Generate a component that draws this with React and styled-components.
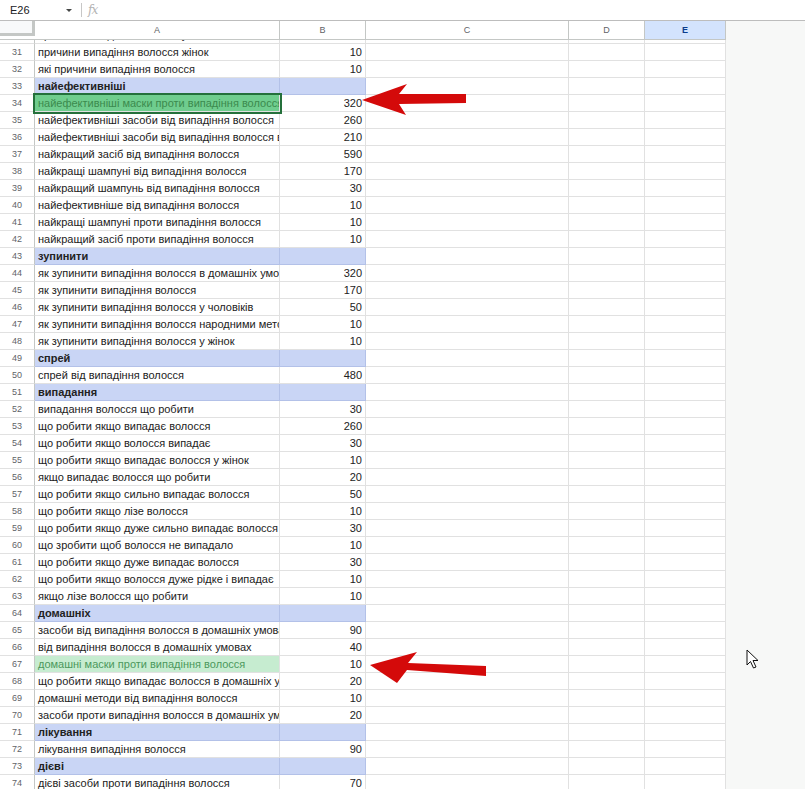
import React from "react";
import styled, { createGlobalStyle, css } from "styled-components";

const GlobalStyle = createGlobalStyle`
  html, body {
    margin: 0;
    padding: 0;
    background: #ffffff;
    overflow: hidden;
  }
  * {
    box-sizing: border-box;
  }
`;

const FONT = `"Liberation Sans", Arial, sans-serif`;

const COLS = [
  { key: "A", width: 245 },
  { key: "B", width: 86 },
  { key: "C", width: 203 },
  { key: "D", width: 76 },
  { key: "E", width: 81 },
];

const ROWS = [
  [30, "причини випадіння волосся у чоловіків", 10],
  [31, "причини випадіння волосся жінок", 10],
  [32, "які причини випадіння волосся", 10],
  [33, "найефективніші", null, "section"],
  [34, "найефективніші маски проти випадіння волосся", 320, "hot"],
  [35, "найефективніші засоби від випадіння волосся", 260],
  [36, "найефективніші засоби від випадіння волосся в домашніх умовах", 210],
  [37, "найкращий засіб від випадіння волосся", 590],
  [38, "найкращі шампуні від випадіння волосся", 170],
  [39, "найкращий шампунь від випадіння волосся", 30],
  [40, "найефективніше від випадіння волосся", 10],
  [41, "найкращі шампуні проти випадіння волосся", 10],
  [42, "найкращий засіб проти випадіння волосся", 10],
  [43, "зупинити", null, "section"],
  [44, "як зупинити випадіння волосся в домашніх умовах", 320],
  [45, "як зупинити випадіння волосся", 170],
  [46, "як зупинити випадіння волосся у чоловіків", 50],
  [47, "як зупинити випадіння волосся народними методами", 10],
  [48, "як зупинити випадіння волосся у жінок", 10],
  [49, "спрей", null, "section"],
  [50, "спрей від випадіння волосся", 480],
  [51, "випадання", null, "section"],
  [52, "випадання волосся що робити", 30],
  [53, "що робити якщо випадає волосся", 260],
  [54, "що робити якщо волосся випадає", 30],
  [55, "що робити якщо випадає волосся у жінок", 10],
  [56, "якщо випадає волосся що робити", 20],
  [57, "що робити якщо сильно випадає волосся", 50],
  [58, "що робити якщо лізе волосся", 10],
  [59, "що робити якщо дуже сильно випадає волосся", 30],
  [60, "що зробити щоб волосся не випадало", 10],
  [61, "що робити якщо дуже випадає волосся", 30],
  [62, "що робити якщо волосся дуже рідке і випадає", 10],
  [63, "якщо лізе волосся що робити", 10],
  [64, "домашніх", null, "section"],
  [65, "засоби від випадіння волосся в домашніх умовах", 90],
  [66, "від випадіння волосся в домашніх умовах", 40],
  [67, "домашні маски проти випадіння волосся", 10, "soft"],
  [68, "що робити якщо випадає волосся в домашніх умовах", 20],
  [69, "домашні методи від випадіння волосся", 10],
  [70, "засоби проти випадіння волосся в домашніх умовах", 20],
  [71, "лікування", null, "section"],
  [72, "лікування випадіння волосся", 90],
  [73, "дієві", null, "section"],
  [74, "дієві засоби проти випадіння волосся", 70],
];

const Page = styled.div`
  position: relative;
  width: 805px;
  height: 789px;
  overflow: hidden;
  font-family: ${FONT};
  color: #222222;
`;

const FormulaBar = styled.div`
  display: flex;
  align-items: center;
  height: 21px;
  border-bottom: 1px solid #bdbdbd;
  background: #ffffff;
`;

const NameBox = styled.div`
  display: flex;
  align-items: center;
  justify-content: space-between;
  width: 72px;
  padding: 0 0 0 10px;
  font-size: 11px;
  color: #202124;
`;

const Caret = styled.span`
  width: 0;
  height: 0;
  border-left: 3px solid transparent;
  border-right: 3px solid transparent;
  border-top: 3px solid #444746;
`;

const Divider = styled.span`
  width: 1px;
  height: 14px;
  margin: 0 6px 0 9px;
  background: #c7c7c7;
`;

const Fx = styled.span`
  font-family: "DejaVu Serif", "Liberation Serif", serif;
  font-style: italic;
  font-size: 12px;
  color: #b4b4b4;
  letter-spacing: -1px;
`;

const Workspace = styled.div`
  display: flex;
  height: calc(100% - 21px);
`;

const Sheet = styled.div`
  display: flex;
  flex-direction: column;
  width: 726px;
  height: 100%;
`;

const Gutter = styled.div`
  flex: 1;
  background: #f7f8f7;
`;

const HeaderRow = styled.div`
  display: flex;
  height: 19px;
  flex-shrink: 0;
`;

const Corner = styled.div`
  width: 35px;
  height: 19px;
  border-bottom: 1px solid #c4c7c5;
  background: #ffffff;
`;

const CornerHandle = styled.div`
  width: 35px;
  height: 15px;
  background: #f8f9fa;
  border-right: 3px solid #c4c7c5;
  border-bottom: 3px solid #c4c7c5;
`;

const ColHead = styled.div`
  width: ${(p) => p.$width}px;
  height: 19px;
  display: flex;
  align-items: center;
  justify-content: center;
  font-size: 9px;
  border-right: 1px solid #c4c7c5;
  border-bottom: 1px solid #c4c7c5;
  color: ${(p) => (p.$active ? "#0b3c8c" : "#5f6368")};
  font-weight: ${(p) => (p.$active ? "bold" : "normal")};
  background: ${(p) => (p.$active ? "#d3e3fd" : "#ffffff")};
`;

const Body = styled.div`
  flex: 1;
  overflow: hidden;
`;

const Rows = styled.div`
  margin-top: -13px;
`;

const Row = styled.div`
  display: flex;
  height: 17px;
`;

const RowNum = styled.div`
  width: 35px;
  height: 17px;
  display: flex;
  align-items: center;
  justify-content: center;
  font-size: 9px;
  color: #5f6368;
  border-right: 1px solid #c4c7c5;
  border-bottom: 1px solid #e1e1e1;
`;

const kindStyles = {
  section: css`
    background: #c9d5f5;
    font-weight: bold;
    border-color: #b3c1e8;
  `,
  hot: css`
    background: #6fcd8e;
    color: #3b8a4d;
    outline: 2px solid #24703b;
    outline-offset: 0;
    position: relative;
    z-index: 1;
  `,
  soft: css`
    background: #c6ecd0;
    color: #4b985c;
  `,
};

const Cell = styled.div`
  width: ${(p) => p.$width}px;
  height: 17px;
  padding: 0 3px;
  font-size: 11px;
  line-height: 16px;
  white-space: nowrap;
  overflow: hidden;
  text-align: ${(p) => (p.$num ? "right" : "left")};
  border-right: 1px solid #e1e1e1;
  border-bottom: 1px solid #e1e1e1;
  ${(p) => p.$kind && kindStyles[p.$kind]}
`;

const Overlay = styled.svg`
  position: absolute;
  left: 0;
  top: 0;
  width: 805px;
  height: 789px;
  pointer-events: none;
`;

function SheetRow({ num, text, value, kind }) {
  const section = kind === "section";
  return (
    <Row>
      <RowNum>{num}</RowNum>
      <Cell $width={COLS[0].width} $kind={kind}>
        {text}
      </Cell>
      <Cell $width={COLS[1].width} $num $kind={section ? "section" : undefined}>
        {value}
      </Cell>
      <Cell $width={COLS[2].width} />
      <Cell $width={COLS[3].width} />
      <Cell $width={COLS[4].width} />
    </Row>
  );
}

export default function App() {
  return (
    <Page>
      <GlobalStyle />
      <FormulaBar>
        <NameBox>
          E26
          <Caret />
        </NameBox>
        <Divider />
        <Fx>fx</Fx>
      </FormulaBar>
      <Workspace>
        <Sheet>
          <HeaderRow>
            <Corner>
              <CornerHandle />
            </Corner>
            {COLS.map((c) => (
              <ColHead key={c.key} $width={c.width} $active={c.key === "E"}>
                {c.key}
              </ColHead>
            ))}
          </HeaderRow>
          <Body>
            <Rows>
              {ROWS.map(([num, text, value, kind]) => (
                <SheetRow key={num} num={num} text={text} value={value} kind={kind} />
              ))}
            </Rows>
          </Body>
        </Sheet>
        <Gutter />
      </Workspace>
      <Overlay viewBox="0 0 805 789">
        <polygon
          points="362,100 407,84 399,94 466,94 466,103 399,104 406,115"
          fill="#d40a0a"
        />
        <polygon
          points="370,665 417,652 408,663 486,666 486,676 407,670 397,683"
          fill="#d40a0a"
        />
        <path
          d="M747 650 L747 665 L750.5 661.5 L753.5 668 L756 667 L753 660.5 L758 660.5 Z"
          fill="#ffffff"
          stroke="#111111"
          strokeWidth="1"
          strokeLinejoin="miter"
        />
      </Overlay>
    </Page>
  );
}
